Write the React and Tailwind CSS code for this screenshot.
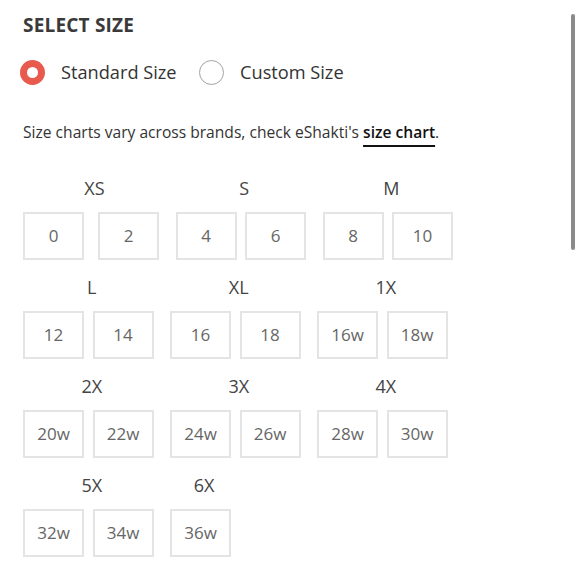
import React from "react";

const rows = [
  [
    { label: "XS", sizes: ["0", "2"], wide: true },
    { label: "S", sizes: ["4", "6"] },
    { label: "M", sizes: ["8", "10"] },
  ],
  [
    { label: "L", sizes: ["12", "14"] },
    { label: "XL", sizes: ["16", "18"] },
    { label: "1X", sizes: ["16w", "18w"] },
  ],
  [
    { label: "2X", sizes: ["20w", "22w"] },
    { label: "3X", sizes: ["24w", "26w"] },
    { label: "4X", sizes: ["28w", "30w"] },
  ],
  [
    { label: "5X", sizes: ["32w", "34w"] },
    { label: "6X", sizes: ["36w"] },
  ],
];

function Group({ g }) {
  return (
    <div className="flex flex-col mr-[9.5px]">
      <div className="h-[24px] leading-[24px] text-[18px] text-[#444] text-center">{g.label}</div>
      <div className={`mt-[12px] pr-[7px] flex ${g.wide ? "gap-[14px]" : "gap-[8.5px]"}`}>
        {g.sizes.map((s) => (
          <div
            key={s}
            className="w-[61px] h-[48px] border-2 border-[#e4e4e4] flex items-center justify-center text-[17px] text-[#666]"
          >
            {s}
          </div>
        ))}
      </div>
    </div>
  );
}

export default function App() {
  return (
    <div
      className="relative w-[580px] h-[580px] bg-white overflow-hidden pl-[23px]"
      style={{ fontFamily: '"Open Sans", sans-serif' }}
    >
      <div className="pt-[13px] h-[37px] text-[19px] leading-[24px] font-bold text-[#3a3a3a] tracking-[0.2px]">SELECT SIZE</div>
      <div className="mt-[23px] flex items-center h-[25px]">
        <div className="flex items-center">
          <span className="w-[25px] h-[25px] rounded-full border-[7px] border-[#e8594e] bg-white box-border -ml-[3px]" />
          <span className="ml-[16px] text-[18.2px] text-[#333] leading-[25px]">Standard Size</span>
        </div>
        <div className="flex items-center ml-[22.5px]">
          <span className="w-[25px] h-[25px] rounded-full border-[1.5px] border-[#a3a3a3] bg-white box-border" />
          <span className="ml-[16px] text-[18.2px] text-[#333] leading-[25px]">Custom Size</span>
        </div>
      </div>
      <p className="mt-[36.6px] text-[15.6px] leading-[20px] text-[#333]">
        Size charts vary across brands, check eShakti's{" "}
        <span className="font-semibold text-[#111] underline decoration-2 underline-offset-[7px]">size chart</span>.
      </p>
      <div className="mt-[34.4px] flex flex-col gap-[15px]">
        {rows.map((r, i) => (
          <div key={i} className="flex">
            {r.map((g) => (
              <Group key={g.label} g={g} />
            ))}
          </div>
        ))}
      </div>
      <div className="absolute left-[571px] top-[14px] w-[4px] h-[236px] rounded-full bg-[#8a8a8a]" />
    </div>
  );
}
